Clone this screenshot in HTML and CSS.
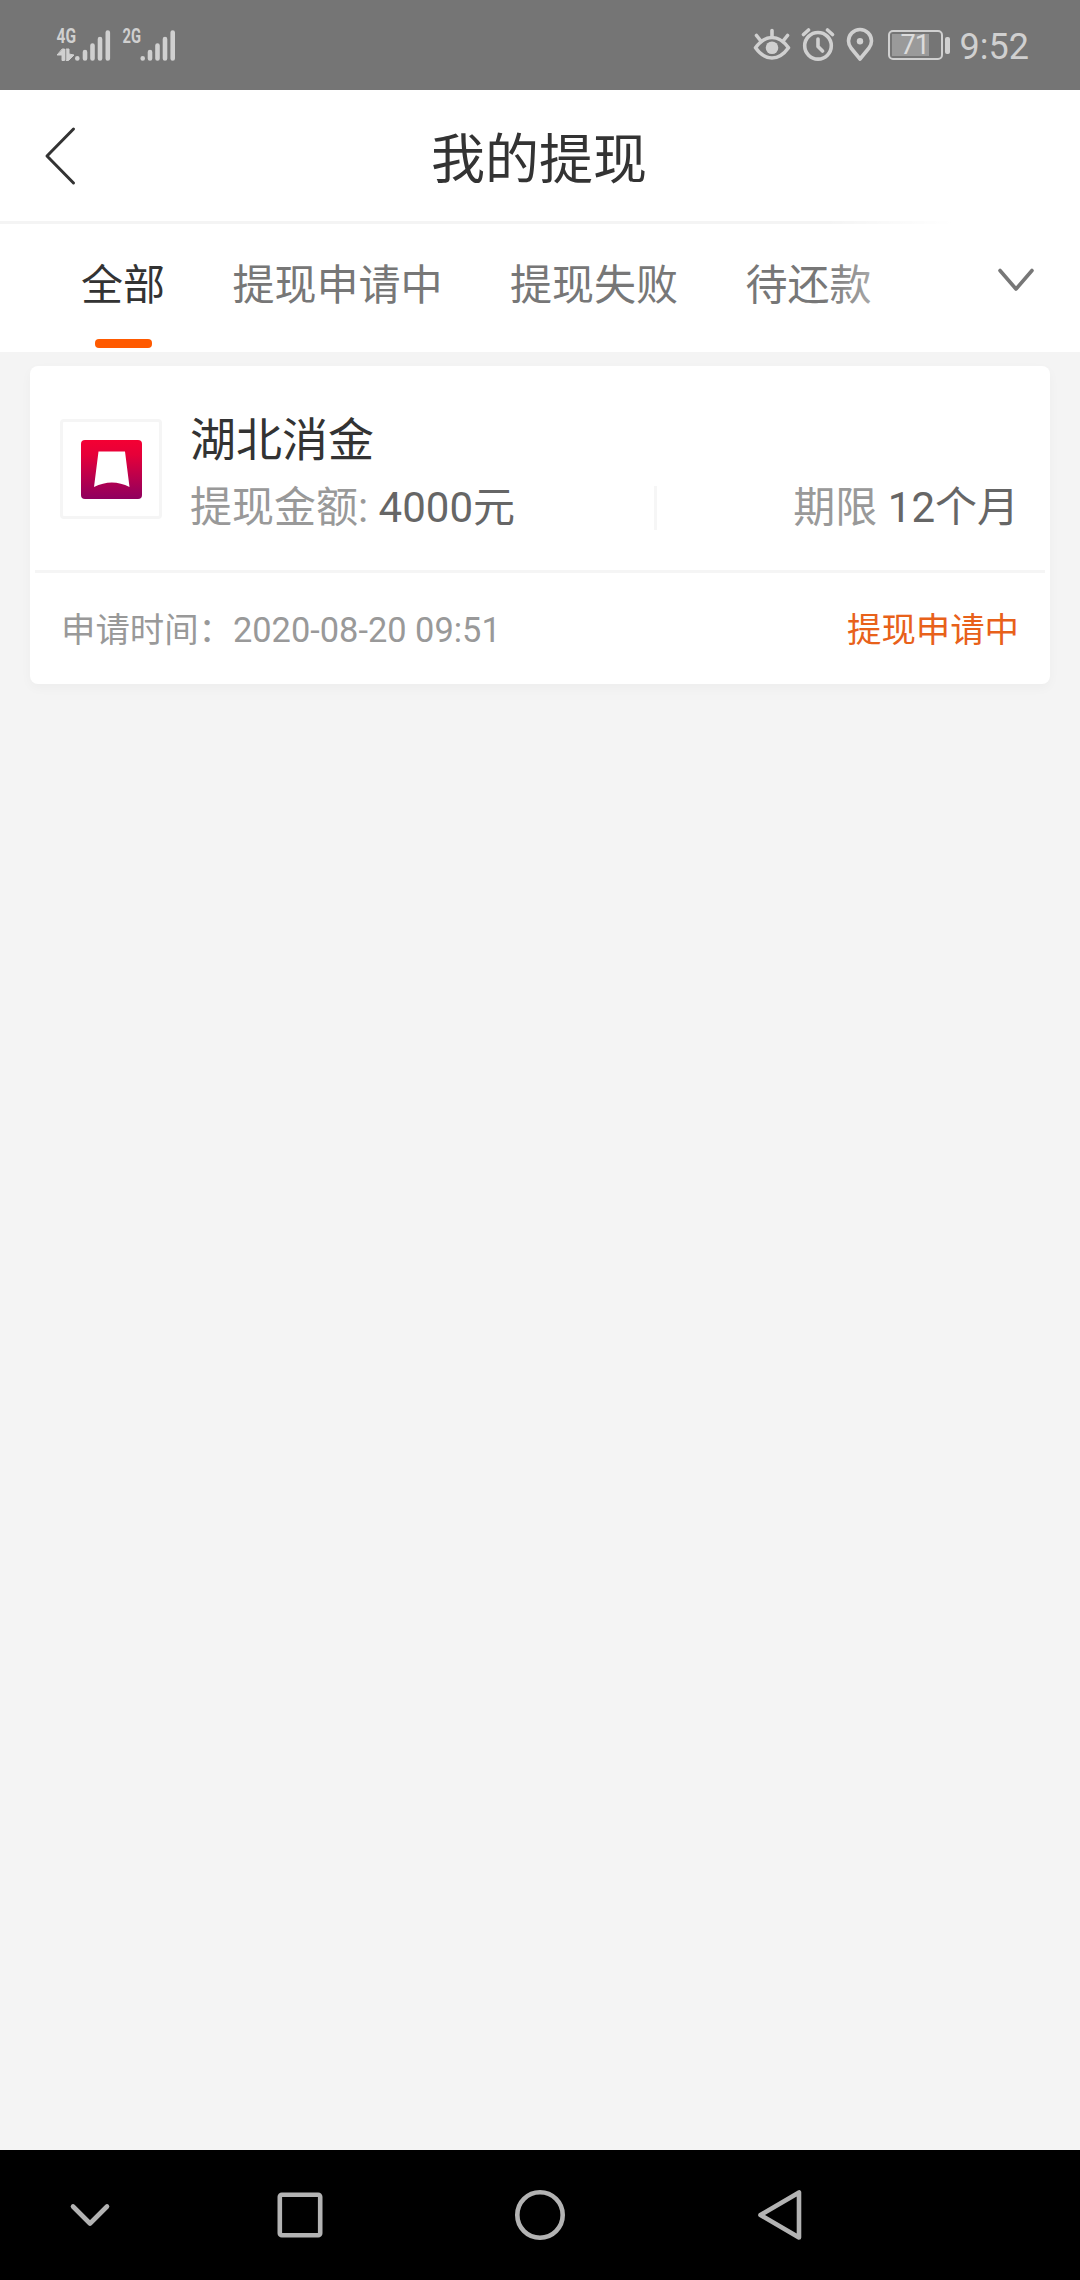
FILE: index.html
```
<!DOCTYPE html>
<html lang="zh-CN">

<head>
    <meta charset="UTF-8">
    <meta name="viewport" content="width=device-width, initial-scale=1.0">
    <title>我的提现</title>
    <link rel="stylesheet" href="styles.css">
</head>

<body>
    <div class="status-bar">
        <div class="signals">
            <svg class="signal" width="56" height="40" viewBox="0 0 56 40">
                <text x="0.500" y="18" textLength="19.500" lengthAdjust="spacingAndGlyphs">4G</text>
                <path class="arrows" d="M6.500 24H8.500V35.500H6V30H1.500ZM10.500 24H13V29L18 30L12.500 35.500H10.500Z" />
                <path d="M21.300 33.300V33.400M29 27V33.500M36.500 20.500V33.500M44 14V33.500M51.800 7.500V33.500" />
            </svg>
            <svg class="signal" width="56" height="40" viewBox="0 0 56 40">
                <text x="0.500" y="18" textLength="18.500" lengthAdjust="spacingAndGlyphs">2G</text>
                <path d="M20.700 33.300V33.400M28 27V33.500M35.500 20.500V33.500M43 14V33.500M50.700 7.500V33.500" />
            </svg>
        </div>
        <div class="status-icons">
            <svg class="eye" width="38" height="36" viewBox="0 0 38 36">
                <path d="M2.500 20.700Q10 10.500 19 10.500T35.500 20.700Q28 31 19 31T2.500 20.700Z" />
                <path d="M19 3.500V9.500M3.500 8.500L7.500 13.500M34.500 8.500L30.500 13.500" />
                <circle class="solid" cx="19" cy="20.700" r="6.300" />
            </svg>
            <svg class="alarm" width="34" height="36" viewBox="0 0 34 36">
                <circle cx="17" cy="18.800" r="13.300" />
                <path d="M17 12V19.500L21.500 24M2.500 7.500L7.500 3M26.500 3L31.500 7.500" />
            </svg>
            <svg class="pin" width="28" height="36" viewBox="0 0 28 36">
                <path d="M14 32L5 21Q2.500 17.500 2.500 14A11.500 11.500 0 0 1 25.500 14Q25.500 17.500 23 21Z" />
                <circle class="solid" cx="14" cy="14.300" r="3.200" />
            </svg>
            <div class="battery">
                <div class="battery-body">
                    <div class="battery-level"></div>
                    <span class="battery-text">71</span>
                </div>
                <div class="battery-cap"></div>
            </div>
            <span class="clock">9:52</span>
        </div>
    </div>

    <header class="header">
        <svg class="back" width="34" height="60" viewBox="0 0 34 60">
            <path d="M29.500 3L3 30L29.500 57" />
        </svg>
        <h1>我的提现</h1>
    </header>

    <nav class="tabs">
        <a class="tab active">全部</a>
        <a class="tab">提现申请中</a>
        <a class="tab">提现失败</a>
        <a class="tab">待还款</a>
        <div class="tabs-more">
            <svg width="40" height="28" viewBox="0 0 40 28">
                <path d="M4 3.500L20 22L36 3.500" />
            </svg>
        </div>
    </nav>

    <main class="list">
        <section class="card">
            <div class="card-main">
                <div class="logo">
                    <svg width="61" height="59" viewBox="0 0 61 59">
                        <defs>
                            <linearGradient id="logo-bg" x1="0" y1="0" x2="0" y2="1">
                                <stop offset="0" stop-color="#f40033" />
                                <stop offset="0.250" stop-color="#e60039" />
                                <stop offset="1" stop-color="#8f005f" />
                            </linearGradient>
                        </defs>
                        <rect width="61" height="59" rx="4" fill="url(#logo-bg)" />
                        <path d="M17.500 11.500H44L48.500 47Q31 38 13 47Z" fill="#fff" />
                    </svg>
                </div>
                <div class="info">
                    <h2>湖北消金</h2>
                    <div class="detail">
                        <div class="amount">提现金额: <em>4000元</em></div>
                        <div class="divider"></div>
                        <div class="term">期限 <em>12个月</em></div>
                    </div>
                </div>
            </div>
            <div class="card-footer">
                <span>申请时间：2020-08-20 09:51</span>
                <span class="state">提现申请中</span>
            </div>
        </section>
    </main>

    <footer class="nav-bar">
        <svg width="60" height="60" viewBox="0 0 60 60">
            <path d="M13 21.500L30 38.500L47 21.500" />
        </svg>
        <svg width="60" height="60" viewBox="0 0 60 60">
            <rect x="9.800" y="9.800" width="40.400" height="40.400" rx="2" />
        </svg>
        <svg width="60" height="60" viewBox="0 0 60 60">
            <circle cx="30" cy="30" r="22.700" />
        </svg>
        <svg width="60" height="60" viewBox="0 0 60 60">
            <path d="M10.500 30L49 7.500V52.500Z" />
        </svg>
    </footer>
</body>

</html>
```
FILE: styles.css
```
* {
    box-sizing: border-box;
}

body {
    display: flex;
    flex-direction: column;
    width: 1080px;
    height: 2280px;
    margin: 0;
    background-color: #f4f4f4;
    color: #333;
    font-family: Roboto, 'Noto Sans CJK SC', sans-serif;
    font-weight: 400;
}

svg {
    display: block;
    flex: none;
    fill: none;
    stroke-linecap: round;
    stroke-linejoin: round;
}

h1,
h2 {
    margin: 0;
    font-weight: 400;
}

em {
    color: #666;
    font-style: normal;
}

/* status bar */
.status-bar {
    display: flex;
    justify-content: space-between;
    align-items: center;
    height: 90px;
    padding: 0 51px 0 56px;
    background-color: #757575;
    color: #d0d0d0;
}

.signals {
    display: flex;
    gap: 10px;
}

.signal {
    stroke: #d0d0d0;
    stroke-width: 4.6;
}

.signal text {
    fill: #d0d0d0;
    stroke: none;
    font-size: 21px;
    font-weight: 700;
}

.signal .arrows {
    fill: #d0d0d0;
    stroke-width: 1;
}

.status-icons {
    display: flex;
    align-items: center;
}

.status-icons svg {
    stroke: #d0d0d0;
    stroke-width: 3.6;
}

.status-icons .solid {
    fill: #d0d0d0;
    stroke: none;
}

.alarm {
    margin-left: 10px;
}

.pin {
    margin-left: 11px;
}

.battery {
    display: flex;
    align-items: center;
    gap: 2px;
    margin-left: 14px;
}

.battery-body {
    display: grid;
    align-items: center;
    width: 55px;
    height: 30px;
    padding: 2px;
    border: 2px solid #d0d0d0;
    border-radius: 5px;
}

.battery-level,
.battery-text {
    grid-area: 1 / 1;
}

.battery-level {
    width: 37px;
    height: 22px;
    background-color: #9a9a9a;
}

.battery-text {
    padding-left: 9px;
    color: #dcdcdc;
    font-size: 27px;
    line-height: 22px;
    letter-spacing: -1px;
}

.battery-cap {
    width: 5px;
    height: 17px;
    border-radius: 2px;
    background-color: #d0d0d0;
}

.clock {
    padding-top: 3px;
    margin-left: 10px;
    font-size: 36px;
    line-height: 40px;
}

/* page header */
.header {
    display: grid;
    grid-template-columns: 1fr auto 1fr;
    align-items: center;
    height: 134px;
    padding: 0 46px 0 44px;
    border-bottom: 3px solid #f4f4f4;
    background-color: #fff;
}

.back {
    stroke: #333;
    stroke-width: 3;
}

.header h1 {
    padding-top: 10px;
    font-size: 54px;
    line-height: 80px;
}

/* filter tabs */
.tabs {
    position: relative;
    display: flex;
    gap: 67.5px;
    height: 128px;
    padding-left: 81px;
    background-color: #fff;
}

.tab {
    display: flex;
    flex-direction: column;
    align-items: center;
    color: #777;
    font-size: 42px;
    line-height: 124px;
}

.tab.active {
    color: #333;
}

.tab.active::after {
    content: '';
    width: 57px;
    height: 9px;
    margin-top: -9px;
    border-radius: 4px;
    background-color: #ff5a00;
}

/* fades the tabs out under the expand arrow */
.tabs-more {
    position: absolute;
    top: -3px;
    right: 0;
    display: flex;
    justify-content: flex-end;
    width: 255px;
    height: 131px;
    padding: 46px 44px 0 0;
    background-image: linear-gradient(90deg, #fff0, #fff 50%);
}

.tabs-more svg {
    stroke: #777;
    stroke-width: 3.6;
}

/* withdrawal list */
.list {
    flex: 1;
    padding: 14px 30px;
}

.card {
    height: 318px;
    border-radius: 8px;
    background-color: #fff;
    box-shadow: 0 4px 12px #00000008;
}

.card-main {
    display: flex;
    height: 204px;
    padding: 0 30px;
}

.logo {
    display: flex;
    align-items: center;
    justify-content: center;
    width: 102px;
    height: 100px;
    margin-top: 53px;
    border: 3px solid #f5f5f5;
    border-radius: 4px;
}

.info {
    flex: 1;
    padding-top: 41px;
    margin-left: 28px;
}

.info h2 {
    font-size: 46px;
    line-height: 66px;
}

.detail {
    display: flex;
    align-items: center;
    color: #999;
    font-size: 42px;
    line-height: 70px;
}

.amount {
    width: 464px;
}

.divider {
    width: 3px;
    height: 44px;
    background-color: #f6f6f6;
}

.term {
    flex: 1;
    padding-right: 1px;
    text-align: right;
}

.card-footer {
    display: flex;
    align-items: center;
    justify-content: space-between;
    height: 114px;
    padding: 0 31px;
    color: #999;
    font-size: 34.4px;
    background-image: linear-gradient(#f5f5f5, #f5f5f5);
    background-position: center top;
    background-repeat: no-repeat;
    background-size: 1010px 3px;
}

.state {
    color: #e8611a;
}

/* system navigation */
.nav-bar {
    display: flex;
    gap: 180px;
    height: 130px;
    padding: 35px 0 0 60px;
    background-color: #000;
}

.nav-bar svg {
    stroke: #b3b3b3;
    stroke-width: 4.6;
}

.nav-bar svg:first-child {
    margin-right: -30px;
}
```
